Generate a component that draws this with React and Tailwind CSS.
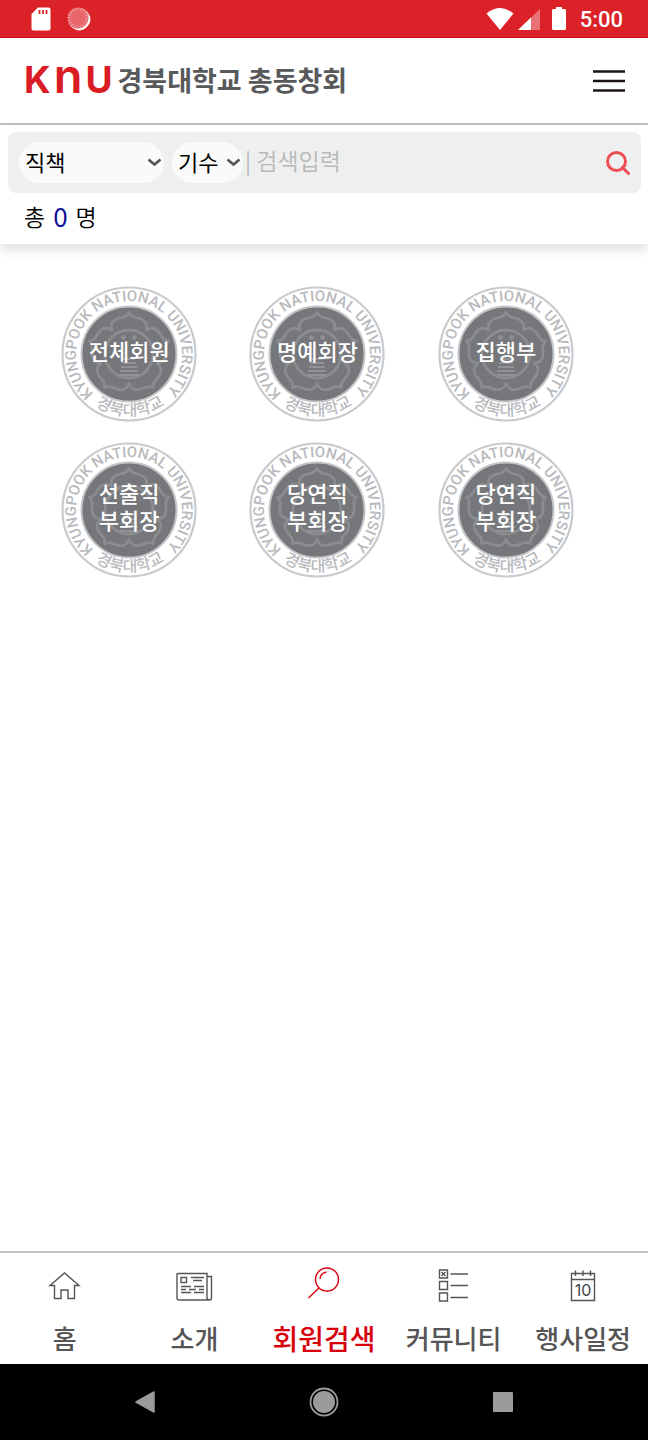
import { useId } from "react";

const groups = [
  ["전체회원"],
  ["명예회장"],
  ["집행부"],
  ["선출직", "부회장"],
  ["당연직", "부회장"],
  ["당연직", "부회장"],
];

const petals = [0, 72, 144, 216, 288];

function StatusBar() {
  return (
    <div className="flex h-[38px] shrink-0 items-center justify-between border-b border-[#cf0f17] bg-[#db2228] pr-[25px] pl-[31px] text-white">
      <div className="flex items-center gap-4">
        <svg className="h-6 w-5" viewBox="0 0 20 24" aria-hidden="true">
          <path d="M7 .5h10.500q2 0 2 2v19q0 2-2 2h-15q-2 0-2-2V7z" fill="#fff" />
          <path d="M8.500 3v4M12 3v4M15.500 3v4" stroke="#db2228" strokeWidth="1.800" />
        </svg>
        <svg className="h-6 w-6" viewBox="0 0 24 24" aria-hidden="true">
          <circle cx="12" cy="12" r="11" fill="#fbdcdd" />
          <path d="M22.500 9A11 11 0 0 1 9 22.500Q19 20 22.500 9z" fill="#fff" stroke="#fff" />
          <circle cx="11" cy="11" r="10.500" fill="#e8656a" />
          <circle cx="11" cy="11" r="9" fill="none" stroke="#f0a0a3" strokeWidth="3" strokeDasharray="1 1.800" />
        </svg>
      </div>
      <div className="flex items-center">
        <svg className="h-6 w-7" viewBox="0 0 28 24" aria-hidden="true">
          <path d="M.5 6.500Q14-4.500 27.500 6.500L14 23z" fill="#fff" />
        </svg>
        <svg className="ml-1 h-6 w-[22px]" viewBox="0 0 22 24" aria-hidden="true">
          <path d="M22 2v21H0z" fill="#ea7277" />
          <path d="M13 10.500V23H0z" fill="#fff" />
        </svg>
        <svg className="ml-3 h-6 w-[14px]" viewBox="0 0 14 24" aria-hidden="true">
          <path d="M4 0h6v2h2.500Q14 2 14 3.500v18q0 1.500-1.500 1.500h-11Q0 23 0 21.500v-18Q0 2 1.500 2H4z" fill="#fff" />
        </svg>
        <span className="ml-[14px] pt-[2px] font-['Roboto',sans-serif] text-[22px] leading-6 font-medium">5:00</span>
      </div>
    </div>
  );
}

function Header() {
  return (
    <header className="flex h-[87px] shrink-0 items-center justify-between border-b-2 border-[#bfbfbf] pr-[19px] pl-6">
      <a href="#home" className="flex items-center gap-[5px] pb-[2px]">
        <span className="flex items-baseline gap-[3px] pb-1 font-['Inter',sans-serif] text-[37px] leading-10 font-bold text-[#da1c24]">
          <span>K</span>
          <span className="text-[47px] leading-10 font-semibold">n</span>
          <span>U</span>
        </span>
        <span className="text-[27px] leading-10 font-bold text-[#58595b]">경북대학교 총동창회</span>
      </a>
      <button type="button" aria-label="메뉴" className="p-1">
        <svg className="h-6 w-8" viewBox="0 0 32 24" aria-hidden="true">
          <path d="M0 2.500h32M0 12h32M0 21.500h32" stroke="#1c1412" strokeWidth="2.600" />
        </svg>
      </button>
    </header>
  );
}

function Picker({ label, className }) {
  return (
    <div className={"relative shrink-0 " + className}>
      <select
        aria-label={label}
        className="h-[41px] w-full appearance-none rounded-full bg-[#fafafa] pb-[3px] pl-[6px] text-[22px] leading-8 text-black outline-none"
      >
        <option>{label}</option>
      </select>
      <svg className="pointer-events-none absolute top-4 right-[2px] h-[9px] w-[15px]" viewBox="0 0 15 9" aria-hidden="true">
        <path d="M1.500 1.500L7.500 6.500L13.500 1.500" fill="none" stroke="#555" strokeWidth="2.600" />
      </svg>
    </div>
  );
}

function SearchPanel() {
  return (
    <section className="shrink-0 bg-white pt-[7px] shadow-[0_6px_10px_rgba(0,0,0,0.12)]">
      <form className="mr-[7px] ml-2 flex h-[61px] items-center rounded-lg bg-[#eef0f0] pr-[11px] pl-[11px]">
        <Picker label="직책" className="w-[145px]" />
        <Picker label="기수" className="ml-2 w-[71px]" />
        <input
          type="text"
          aria-label="검색입력"
          placeholder="| 검색입력"
          className="h-10 min-w-0 flex-1 bg-transparent pb-[6px] pl-[2px] text-[23px] font-[350] text-black outline-none placeholder:text-[#b8b8b8]"
        />
        <button type="submit" aria-label="검색">
          <svg className="h-6 w-6" viewBox="0 0 24 24" aria-hidden="true">
            <circle cx="10.500" cy="10.500" r="9" fill="none" stroke="#ee4d51" strokeWidth="2.900" />
            <path d="M16.500 16.500L22.500 22.500" stroke="#ee4d51" strokeWidth="3" strokeLinecap="round" />
          </svg>
        </button>
      </form>
      <p className="flex h-[51px] items-center gap-2 pb-[5px] pl-6 text-[23px] leading-8 font-[350] text-black">
        총 <span className="text-[26px] font-normal text-[#10109a]">0</span> 명
      </p>
    </section>
  );
}

function Seal() {
  const id = useId();
  return (
    <svg className="col-start-1 row-start-1 size-34" viewBox="-68 -68 136 136" aria-hidden="true">
      <defs>
        <path id={id + "t"} d="M0 53A53 53 0 0 1 0-53A53 53 0 0 1 0 53" />
        <path id={id + "b"} d="M-49.500 37.300A62 62 0 0 0 49.500 37.300" />
      </defs>
      <circle r="66.500" fill="#fff" stroke="#c9cacc" strokeWidth="2.200" />
      <circle r="47.500" fill="#76777a" stroke="#c4c5c7" strokeWidth="2" />
      <g fill="none" stroke="#8b8c8f" strokeWidth="2.800" strokeLinejoin="round">
        {petals.map((angle) => (
          <path
            key={angle}
            transform={`rotate(${angle})`}
            d="M-17-23C-20-32-14-35-7-36.500Q-2-37.500 0-41.500Q2-37.500 7-36.500C14-35 20-32 17-23"
          />
        ))}
        <circle r="24" />
      </g>
      <path d="M-6 5H6M-7 9H7M-8 13H8M-9 17H9M-9.500 21H9.500" stroke="#919295" strokeWidth="1.800" />
      <path d="M-5.500-19v5M-8-16.500h5M5.500-19v5M3-16.500h5" stroke="#919295" strokeWidth="2" />
      <text fill="#b9babd" className="font-['Roboto',sans-serif] text-[15px] font-medium">
        <textPath href={"#" + id + "t"} startOffset="49.500%" textAnchor="middle">
          KYUNGPOOK NATIONAL UNIVERSITY
        </textPath>
      </text>
      <text fill="#b9babd" className="text-[16px] font-medium">
        <textPath href={"#" + id + "b"} startOffset="51%" textAnchor="middle">
          경북대학교
        </textPath>
      </text>
    </svg>
  );
}

function Groups() {
  return (
    <main className="flex-1 pt-[42px] pr-12 pl-[35px]">
      <div className="grid grid-cols-3 justify-items-center gap-y-5">
        {groups.map((lines, i) => (
          <button key={i} type="button" className="grid place-items-center">
            <Seal />
            <span className="z-10 col-start-1 row-start-1 pb-2 text-[22px] leading-[27px] font-medium text-white">
              {lines.map((line) => (
                <span key={line} className="block">{line}</span>
              ))}
            </span>
          </button>
        ))}
      </div>
    </main>
  );
}

function HomeIcon() {
  return (
    <path d="M5 16.500L19.500 4L34 16.500H29.500V29.500H23V21H16V29.500H9.500V16.500z" />
  );
}

function NewsIcon() {
  return (
    <>
      <path d="M3 5.500Q3 4.500 4 4.500H33V28.500Q33 31 35.500 31H5Q3 31 3 29zM33 7.500H37.500V29Q37.500 31 35.500 31" />
      <path d="M7 8.500H12.500V13.500H7zM17 8.500H30M19 11.500H28M7 17.500H17M20 17.500H30M7 20.500H12M15 20.500H22M25 20.500H30M7 23.500H17M20 23.500H30" />
    </>
  );
}

function SearchIcon() {
  return (
    <>
      <circle cx="23" cy="10.500" r="11.500" />
      <path d="M15 19L4.500 29M16 10Q16.500 4 22.500 3" />
    </>
  );
}

function ListIcon() {
  return (
    <>
      <path d="M5.500 1h8v8H5.500zM5.500 12.500h8v8H5.500zM5.500 24h8v8H5.500zM7.500 3l4 4M11.500 3l-4 4" />
      <path d="M16.500 5H34M16.500 16.500H34M16.500 28.500H34" />
    </>
  );
}

function CalendarIcon() {
  return (
    <>
      <path d="M8.500 4.500H31.500V31.500H8.500zM8.500 10.500H31.500M12.500 1.500v5.500M20 1.500v5.500M27.500 1.500v5.500" />
      <text x="20" y="27" textAnchor="middle" stroke="none" fill="#444" className="font-['Inter',sans-serif] text-[16px] font-normal">10</text>
    </>
  );
}

const tabs = [
  { label: "홈", Icon: HomeIcon },
  { label: "소개", Icon: NewsIcon },
  { label: "회원검색", Icon: SearchIcon, active: true },
  { label: "커뮤니티", Icon: ListIcon },
  { label: "행사일정", Icon: CalendarIcon },
];

function TabBar() {
  return (
    <nav className="grid h-[113px] shrink-0 grid-cols-5 border-t-2 border-[#c2c2c2] bg-white">
      {tabs.map(({ label, Icon, active }) => (
        <a
          key={label}
          href="#tab"
          aria-current={active ? "page" : undefined}
          className={
            "flex flex-col items-center pt-4 whitespace-nowrap " +
            (active ? "text-[28px] font-medium text-[#d9000d]" : "text-[26px] font-medium text-[#555]")
          }
        >
          <svg
            className="h-9 w-10 shrink-0 overflow-visible"
            viewBox="0 0 40 36"
            fill="none"
            stroke="currentColor"
            strokeWidth="1.400"
            aria-hidden="true"
          >
            <Icon />
          </svg>
          <span className="mt-[15px] leading-9">{label}</span>
        </a>
      ))}
    </nav>
  );
}

function SystemBar() {
  return (
    <div className="flex h-[76px] shrink-0 items-center justify-center gap-[149px] bg-black">
      <button type="button" aria-label="뒤로">
        <svg className="size-[30px]" viewBox="0 0 30 30" aria-hidden="true">
          <path d="M6 15L24 5V25z" fill="#9b9b9b" stroke="#9b9b9b" strokeWidth="1.500" strokeLinejoin="round" />
        </svg>
      </button>
      <button type="button" aria-label="홈 화면">
        <svg className="size-[30px]" viewBox="0 0 30 30" aria-hidden="true">
          <circle cx="15" cy="15" r="13.500" fill="none" stroke="#9b9b9b" strokeWidth="1.800" />
          <circle cx="15" cy="15" r="11" fill="#9b9b9b" />
        </svg>
      </button>
      <button type="button" aria-label="최근 앱">
        <svg className="size-[30px]" viewBox="0 0 30 30" aria-hidden="true">
          <rect x="5" y="5" width="20" height="20" rx="1" fill="#9b9b9b" />
        </svg>
      </button>
    </div>
  );
}

export default function App() {
  return (
    <div className="flex min-h-screen flex-col bg-white font-['Noto_Sans_CJK_KR',sans-serif]">
      <StatusBar />
      <Header />
      <SearchPanel />
      <Groups />
      <TabBar />
      <SystemBar />
    </div>
  );
}
